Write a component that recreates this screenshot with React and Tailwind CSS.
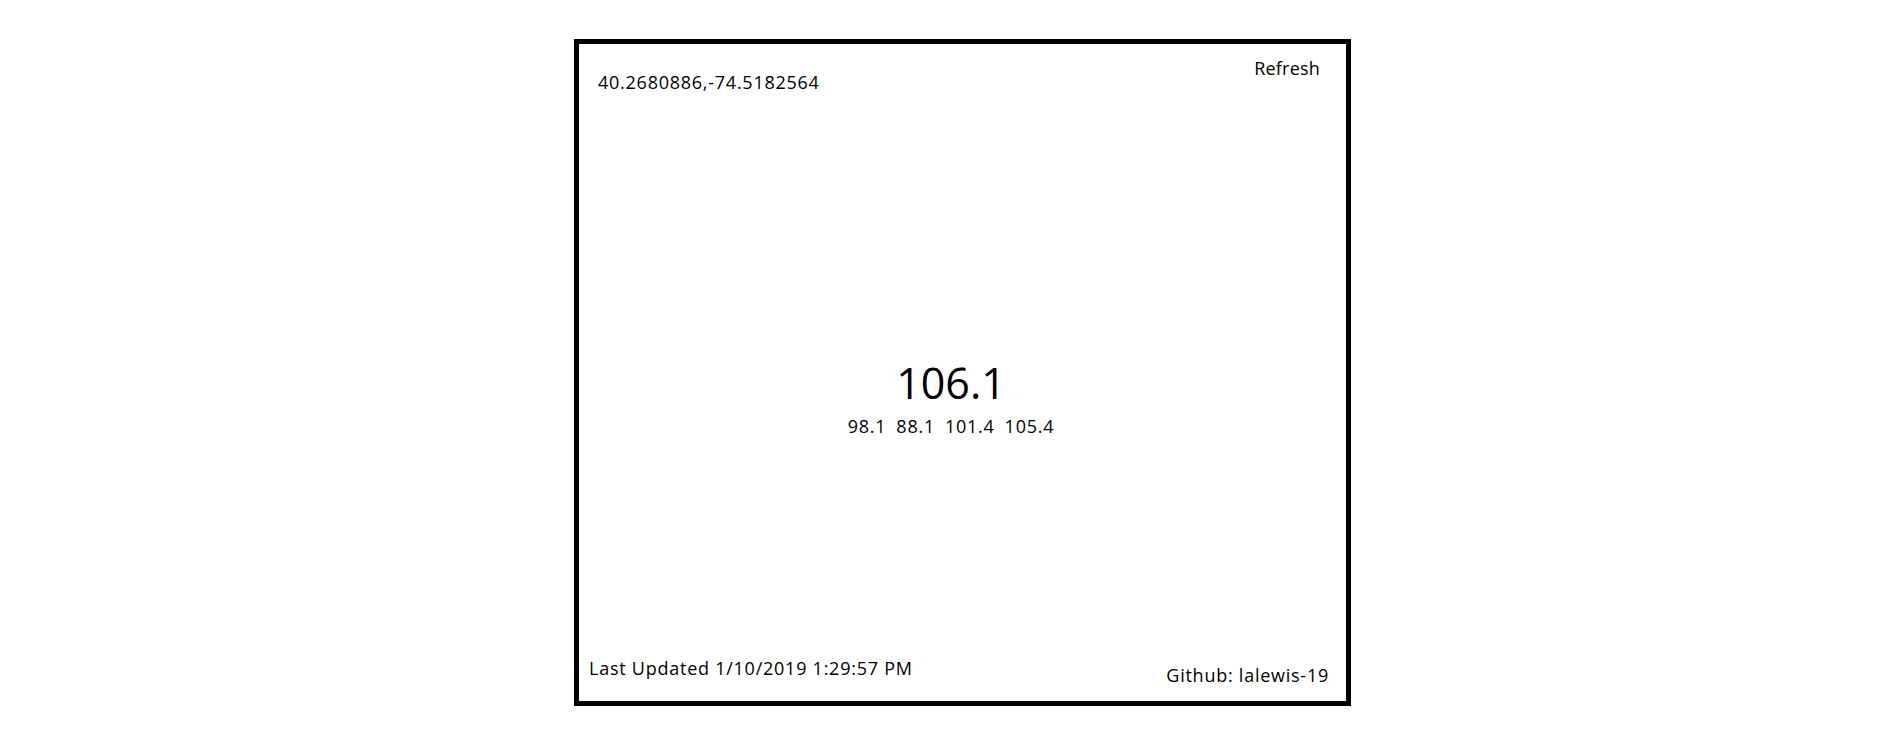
export default function App() {
  const readings = ["98.1", "88.1", "101.4", "105.4"];
  return (
    <div className="min-h-screen bg-white text-black" style={{ fontFamily: '"Open Sans", sans-serif' }}>
      <div className="pt-[39px] pl-[574px]">
        <div className="box-border flex h-[667px] w-[777px] flex-col border-[5px] border-black">
          {/* top row */}
          <div className="flex items-start justify-between text-[18px] leading-[24px] tracking-[0.75px]">
            <div className="mt-[26px] pl-[19px]">40.2680886,-74.5182564</div>
            <div className="mt-[12px] pr-[26px] tracking-[0.2px] cursor-pointer">Refresh</div>
          </div>

          {/* current reading */}
          <div className="mt-[267px] flex flex-col items-center pr-[23px]">
            <div className="text-[43px] leading-[43px]">106.1</div>
            <div className="mt-[10px] flex gap-[10px] text-[18px] leading-[24px] tracking-[0.75px]">
              {readings.map((r) => (
                <span key={r}>{r}</span>
              ))}
            </div>
          </div>

          {/* bottom row */}
          <div className="mt-auto flex items-end justify-between text-[18px] leading-[24px] tracking-[0.75px]">
            <div className="mb-[21px] pl-[10px]">Last Updated 1/10/2019 1:29:57 PM</div>
            <div className="mb-[14px] pr-[17px]">Github: lalewis-19</div>
          </div>
        </div>
      </div>
    </div>
  );
}
